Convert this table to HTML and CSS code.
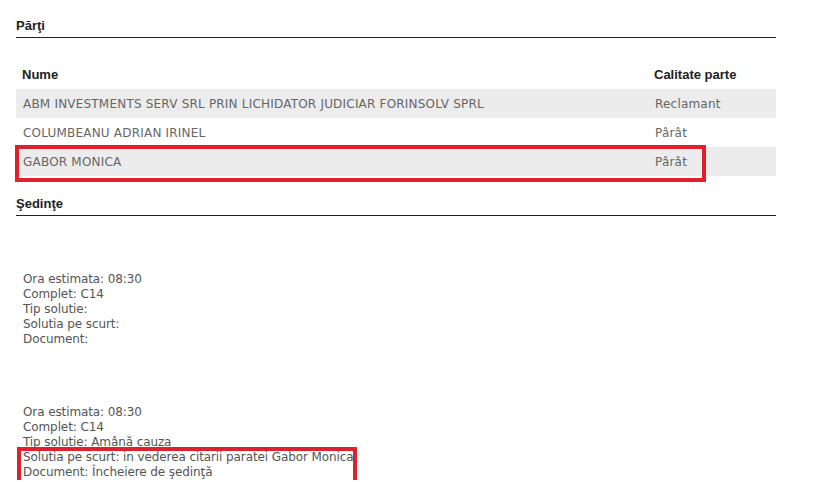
FILE: index.html
```html
<!DOCTYPE html>
<html lang="ro">
<head>
  <meta charset="UTF-8">
  <title>Dosar</title>
  <link rel="stylesheet" href="styles.css">
</head>
<body>
  <div class="container">
    <h2 class="section-title">Părţi</h2>

    <div class="parties">
      <table class="parties-table">
        <thead>
          <tr>
            <th class="col-name">Nume</th>
            <th class="col-role">Calitate parte</th>
          </tr>
        </thead>
        <tbody>
          <tr class="odd">
            <td>ABM INVESTMENTS SERV SRL PRIN LICHIDATOR JUDICIAR FORINSOLV SPRL</td>
            <td>Reclamant</td>
          </tr>
          <tr>
            <td>COLUMBEANU ADRIAN IRINEL</td>
            <td>Pârât</td>
          </tr>
          <tr class="odd">
            <td>GABOR MONICA</td>
            <td>Pârât</td>
          </tr>
        </tbody>
      </table>
      <div class="highlight highlight-row"></div>
    </div>

    <h2 class="section-title section-title-hearings">Şedinţe</h2>

    <div class="hearings">
      <div class="hearing">
        <div>Ora estimata: 08:30</div>
        <div>Complet: C14</div>
        <div>Tip solutie: </div>
        <div>Solutia pe scurt: </div>
        <div>Document: </div>
      </div>

      <div class="hearing">
        <div>Ora estimata: 08:30</div>
        <div>Complet: C14</div>
        <div>Tip solutie: Amână cauza</div>
        <div>Solutia pe scurt: in vederea citarii paratei Gabor Monica</div>
        <div>Document: Încheiere de şedinţă</div>
        <div class="highlight highlight-lines"></div>
      </div>
    </div>
  </div>
</body>
</html>
```

FILE: styles.css
```css
body {
  margin: 0;
  padding: 0;
  background: white;
  color: #555;
  font-family: 'DejaVu Sans', Verdana, sans-serif;
  font-size: 12px;
}

.container {
  width: 760px;
  padding: 0 16px;
}

.section-title {
  margin: 0;
  padding-top: 18px;
  padding-bottom: 4px;
  border-bottom: 1px solid #222;
  font-family: 'Liberation Sans', Arial, sans-serif;
  font-size: 13px;
  font-weight: bold;
  color: #222;
  line-height: 15px;
}

.section-title-hearings {
  padding-top: 20px;
}

.parties {
  position: relative;
  margin-top: 22px;
}

.parties-table {
  width: 100%;
  border-collapse: collapse;
}

.parties-table th {
  height: 29px;
  padding: 0 6px;
  text-align: left;
  font-family: 'Liberation Sans', Arial, sans-serif;
  font-size: 13px;
  font-weight: bold;
  color: #222;
}

.parties-table td {
  height: 29px;
  padding: 0 7px;
  color: #666;
  letter-spacing: 0.2px;
}

.parties-table tr.odd td {
  background: #ececec;
}

.col-role {
  width: 116px;
}

.highlight {
  position: absolute;
  border: 4px solid #e0212b;
}

.highlight-row {
  left: -1px;
  top: 85px;
  width: 683px;
  height: 29px;
}

.hearings {
  display: flex;
  flex-direction: column;
  gap: 58px;
  padding-top: 56px;
}

.hearing {
  position: relative;
  line-height: 15px;
  padding-left: 7px;
  color: #555;
  letter-spacing: -0.1px;
}

.highlight-lines {
  left: 1px;
  top: 42px;
  width: 332px;
  height: 34px;
}
```
